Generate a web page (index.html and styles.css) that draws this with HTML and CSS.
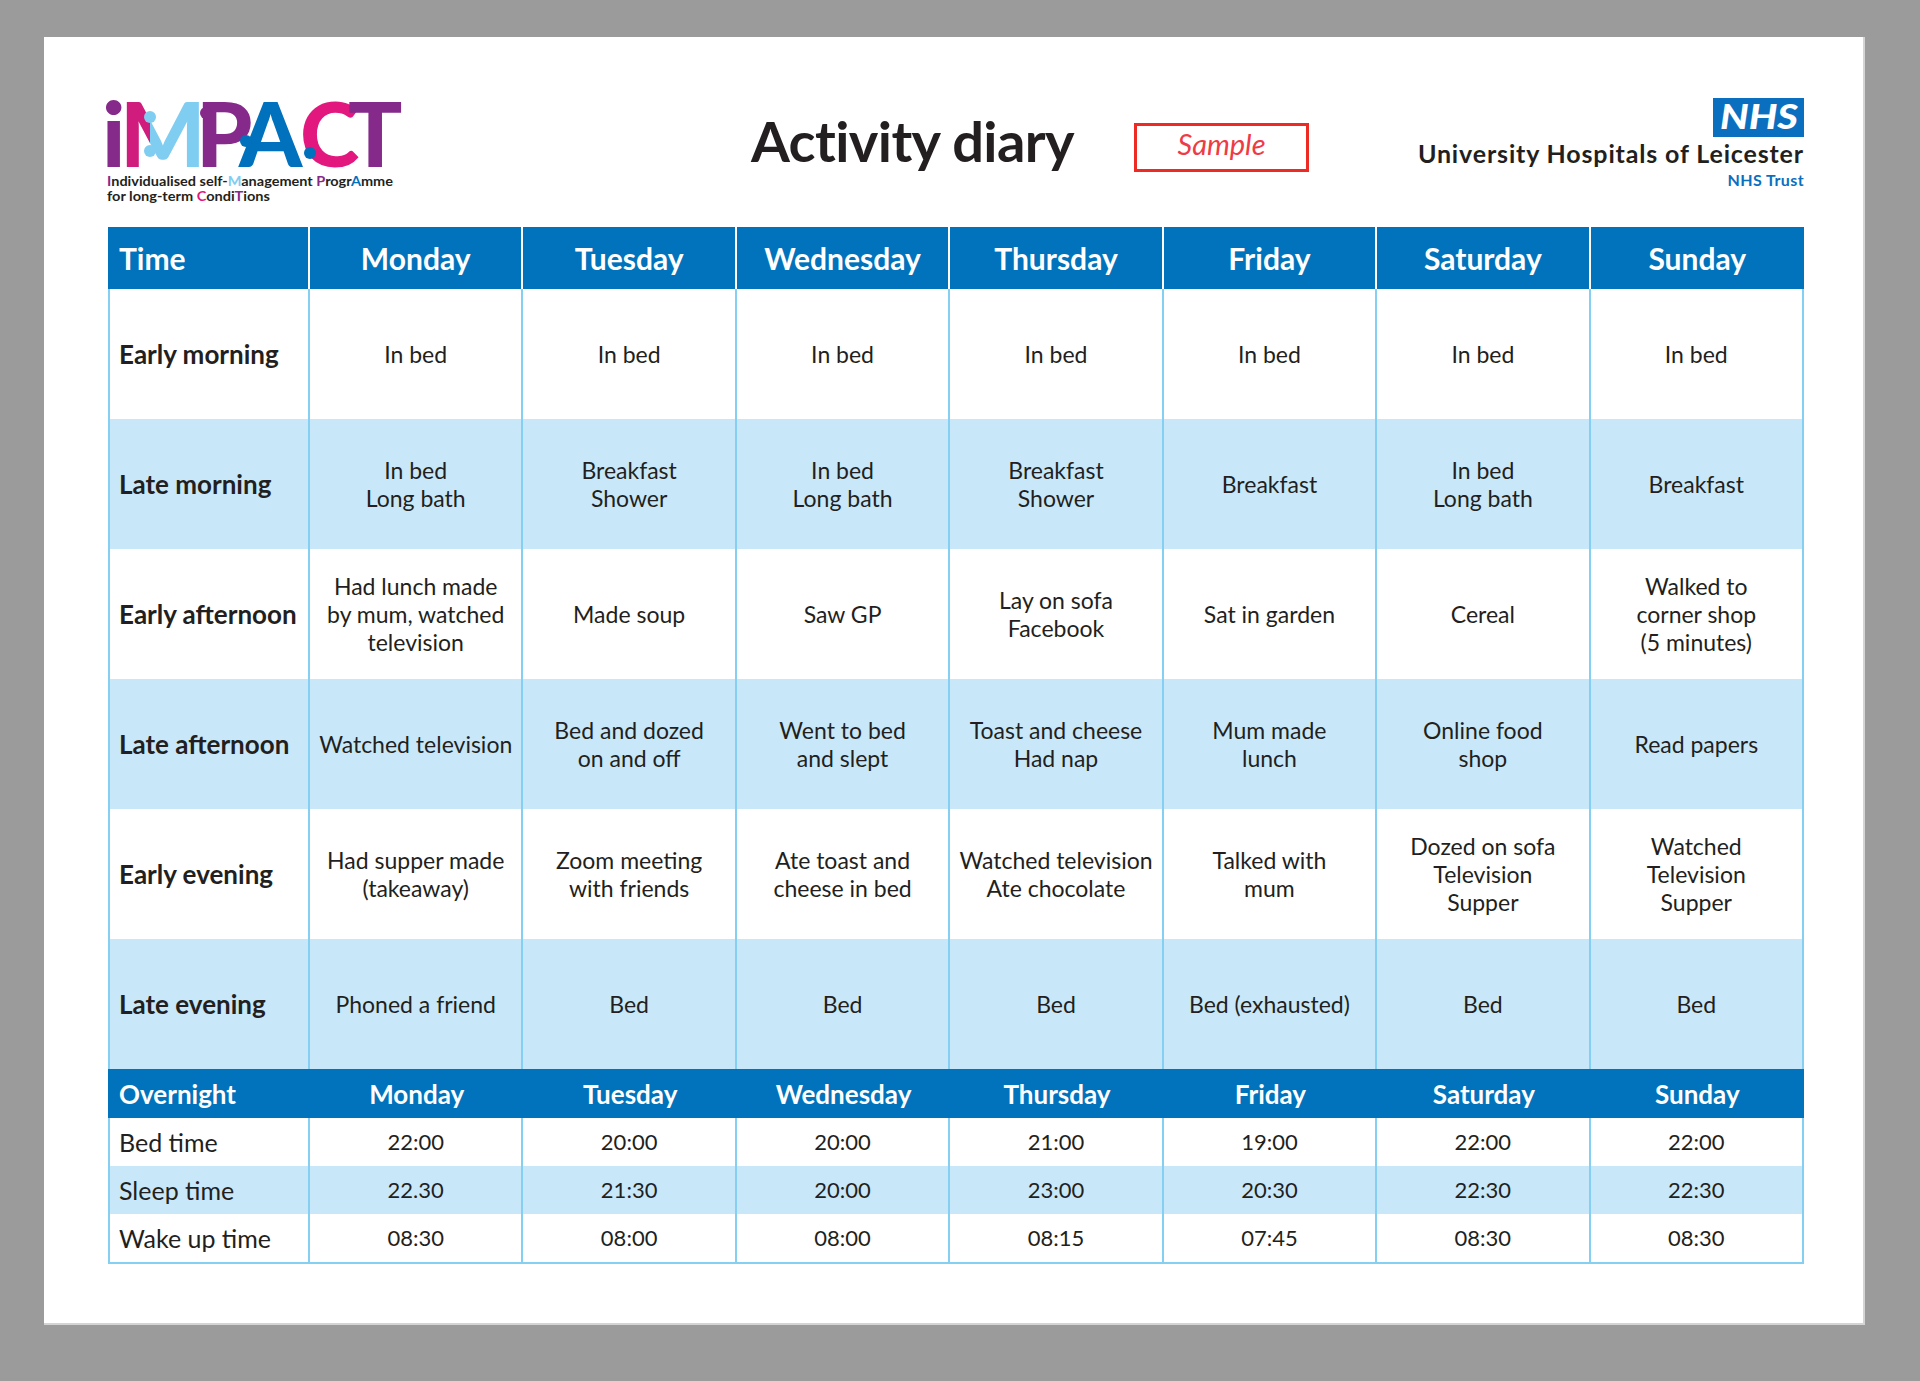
FILE: index.html
```html
<!DOCTYPE html>
<html lang="en">
<head>
<meta charset="utf-8">
<title>Activity diary</title>
<link rel="stylesheet" href="styles.css">
</head>
<body>
<div class="paper">
  <header class="top">
    <svg class="logo" width="310" height="140" viewBox="0 -25 310 140" aria-label="IMPACT">
      <defs>
        <linearGradient id="mgrad" gradientUnits="userSpaceOnUse" x1="27" y1="0" x2="105" y2="0">
          <stop offset="0" stop-color="#d01c7c"/>
          <stop offset="0.29" stop-color="#d01c7c"/>
          <stop offset="0.29" stop-color="#80cdf2"/>
          <stop offset="1" stop-color="#80cdf2"/>
        </linearGradient>
      </defs>
      <text class="logo-letters" x="2 20 96 139 200 248" y="72"><tspan fill="#85298a">i</tspan><tspan fill="url(#mgrad)">M</tspan><tspan fill="#85298a">P</tspan><tspan fill="#0071bc">A</tspan><tspan fill="#e2187f">C</tspan><tspan fill="#85298a">T</tspan></text>
      <circle cx="50" cy="22" r="6" fill="#80cdf2"/>
      <circle cx="50" cy="56" r="6" fill="#80cdf2"/>
      <circle cx="106" cy="18" r="6" fill="#85298a"/>
      <circle cx="146" cy="46" r="6" fill="#0071bc"/>
      <circle cx="210" cy="58" r="6" fill="#0071bc"/>
      <text class="logo-sub" x="7" y="91" textLength="286" lengthAdjust="spacingAndGlyphs"><tspan fill="#85298a">I</tspan>ndividualised self-<tspan fill="#80cdf2">M</tspan>anagement <tspan fill="#85298a">P</tspan>rogr<tspan fill="#0071bc">A</tspan>mme</text>
      <text class="logo-sub" x="7" y="106" textLength="163" lengthAdjust="spacingAndGlyphs">for long-term <tspan fill="#e2187f">C</tspan>ondi<tspan fill="#85298a">T</tspan>ions</text>
    </svg>
    <h1 class="title">Activity diary</h1>
    <div class="sample">Sample</div>
    <div class="nhs">
      <svg class="nhs-mark" width="91" height="46" viewBox="0 0 91 46" aria-label="NHS">
        <rect y="7" width="91" height="39" fill="#0b6fc0"/>
        <text x="7" y="38" textLength="78" lengthAdjust="spacingAndGlyphs">NHS</text>
      </svg>
      <div class="trust-name">University Hospitals of Leicester</div>
      <div class="trust-sub">NHS Trust</div>
    </div>
  </header>

  <section class="diary">
    <div class="row head">
      <div class="h first">Time</div>
      <div class="h">Monday</div>
      <div class="h">Tuesday</div>
      <div class="h">Wednesday</div>
      <div class="h">Thursday</div>
      <div class="h">Friday</div>
      <div class="h">Saturday</div>
      <div class="h last">Sunday</div>
    </div>
    <div class="row body">
      <div class="c lab">Early morning</div>
      <div class="c">In bed</div>
      <div class="c">In bed</div>
      <div class="c">In bed</div>
      <div class="c">In bed</div>
      <div class="c">In bed</div>
      <div class="c">In bed</div>
      <div class="c">In bed</div>
    </div>
    <div class="row body alt">
      <div class="c lab">Late morning</div>
      <div class="c">In bed<br>Long bath</div>
      <div class="c">Breakfast<br>Shower</div>
      <div class="c">In bed<br>Long bath</div>
      <div class="c">Breakfast<br>Shower</div>
      <div class="c">Breakfast</div>
      <div class="c">In bed<br>Long bath</div>
      <div class="c">Breakfast</div>
    </div>
    <div class="row body">
      <div class="c lab">Early afternoon</div>
      <div class="c">Had lunch made<br>by mum, watched<br>television</div>
      <div class="c">Made soup</div>
      <div class="c">Saw GP</div>
      <div class="c">Lay on sofa<br>Facebook</div>
      <div class="c">Sat in garden</div>
      <div class="c">Cereal</div>
      <div class="c">Walked to<br>corner shop<br>(5 minutes)</div>
    </div>
    <div class="row body alt">
      <div class="c lab">Late afternoon</div>
      <div class="c">Watched television</div>
      <div class="c">Bed and dozed<br>on and off</div>
      <div class="c">Went to bed<br>and slept</div>
      <div class="c">Toast and cheese<br>Had nap</div>
      <div class="c">Mum made<br>lunch</div>
      <div class="c">Online food<br>shop</div>
      <div class="c">Read papers</div>
    </div>
    <div class="row body">
      <div class="c lab">Early evening</div>
      <div class="c">Had supper made<br>(takeaway)</div>
      <div class="c">Zoom meeting<br>with friends</div>
      <div class="c">Ate toast and<br>cheese in bed</div>
      <div class="c">Watched television<br>Ate chocolate</div>
      <div class="c">Talked with<br>mum</div>
      <div class="c">Dozed on sofa<br>Television<br>Supper</div>
      <div class="c">Watched<br>Television<br>Supper</div>
    </div>
    <div class="row body alt">
      <div class="c lab">Late evening</div>
      <div class="c">Phoned a friend</div>
      <div class="c">Bed</div>
      <div class="c">Bed</div>
      <div class="c">Bed</div>
      <div class="c">Bed (exhausted)</div>
      <div class="c">Bed</div>
      <div class="c">Bed</div>
    </div>
  </section>

  <section class="overnight">
    <div class="row ohead">
      <div class="oh first">Overnight</div>
      <div class="oh">Monday</div>
      <div class="oh">Tuesday</div>
      <div class="oh">Wednesday</div>
      <div class="oh">Thursday</div>
      <div class="oh">Friday</div>
      <div class="oh">Saturday</div>
      <div class="oh">Sunday</div>
    </div>
    <div class="row orow">
      <div class="o lab">Bed time</div>
      <div class="o">22:00</div>
      <div class="o">20:00</div>
      <div class="o">20:00</div>
      <div class="o">21:00</div>
      <div class="o">19:00</div>
      <div class="o">22:00</div>
      <div class="o">22:00</div>
    </div>
    <div class="row orow alt">
      <div class="o lab">Sleep time</div>
      <div class="o">22.30</div>
      <div class="o">21:30</div>
      <div class="o">20:00</div>
      <div class="o">23:00</div>
      <div class="o">20:30</div>
      <div class="o">22:30</div>
      <div class="o">22:30</div>
    </div>
    <div class="row orow">
      <div class="o lab">Wake up time</div>
      <div class="o">08:30</div>
      <div class="o">08:00</div>
      <div class="o">08:00</div>
      <div class="o">08:15</div>
      <div class="o">07:45</div>
      <div class="o">08:30</div>
      <div class="o">08:30</div>
    </div>
  </section>
</div>
</body>
</html>
```

FILE: styles.css
```css
html {
  background: #9b9b9b;
}

body {
  margin: 0;
  padding: 37px 0 0 44px;
  font-family: Lato, "Open Sans", "Liberation Sans", sans-serif;
  color: #231f20;
}

.paper {
  width: 1821px;
  height: 1288px;
  box-sizing: border-box;
  background: #ffffff;
  border-right: 2px solid #d4d4d4;
  border-bottom: 2px solid #d4d4d4;
  padding: 0 59px 0 64px;
}

/* ---------- header ---------- */
.top {
  display: flex;
  align-items: flex-start;
  height: 190px;
  width: 1696px;
}

.logo {
  flex: none;
  display: block;
  margin: 33px 0 0 -8px;
}

.logo-letters {
  font-family: Lato, "DejaVu Sans", sans-serif;
  font-weight: 900;
  font-size: 90px;
}

.logo-sub {
  font-family: Lato, "DejaVu Sans", sans-serif;
  font-weight: 700;
  font-size: 12.5px;
  fill: #231f20;
}

.title {
  flex: none;
  margin: 76px 0 0 341px;
  width: 383px;
  font-size: 56px;
  line-height: 56px;
  font-weight: 700;
  letter-spacing: -0.6px;
  color: #231f20;
  white-space: nowrap;
}

.sample {
  flex: none;
  box-sizing: border-box;
  width: 175px;
  height: 49px;
  margin-top: 86px;
  border: 3px solid #ee2a24;
  padding-bottom: 7px;
  line-height: 36px;
  text-align: center;
  font-style: italic;
  font-size: 29px;
  color: #ee3b45;
}

.nhs {
  margin-left: auto;
  margin-top: 54px;
  display: flex;
  flex-direction: column;
  align-items: flex-end;
}

.nhs-mark {
  display: block;
}

.nhs-mark text {
  font-family: Lato, "DejaVu Sans", sans-serif;
  font-weight: 900;
  font-style: italic;
  font-size: 35px;
  fill: #ffffff;
}

.trust-name {
  margin-top: 4px;
  font-size: 25px;
  line-height: 25px;
  font-weight: 700;
  letter-spacing: 0.85px;
  color: #231f20;
  white-space: nowrap;
}

.trust-sub {
  margin-top: 6px;
  font-size: 16px;
  line-height: 16px;
  font-weight: 700;
  letter-spacing: 0.4px;
  color: #0b6fc0;
}

/* ---------- table ---------- */
.diary,
.overnight {
  width: 1696px;
}

.row {
  display: grid;
  grid-template-columns: 202px repeat(7, minmax(0, 1fr));
}

.row.alt {
  background: #c8e8fa;
}

.head {
  height: 62px;
  background: #0073bc;
}

.h {
  box-sizing: border-box;
  display: flex;
  align-items: center;
  justify-content: center;
  border-right: 2px solid #ffffff;
  color: #ffffff;
  font-weight: 700;
  font-size: 30px;
}

.h.first {
  justify-content: flex-start;
  padding-left: 11px;
}

.h.last {
  border-right: 0;
}

.body {
  height: 130px;
}

.c,
.o {
  box-sizing: border-box;
  display: flex;
  align-items: center;
  justify-content: center;
  text-align: center;
  border-right: 2px solid #84cff2;
  font-size: 23px;
  line-height: 28px;
  color: #231f20;
}

.c.lab,
.o.lab {
  justify-content: flex-start;
  text-align: left;
  border-left: 2px solid #84cff2;
  padding-left: 9px;
}

.c.lab {
  font-weight: 700;
  font-size: 26px;
}

.ohead {
  height: 49px;
  background: #0073bc;
}

.oh {
  display: flex;
  align-items: center;
  justify-content: center;
  color: #ffffff;
  font-weight: 700;
  font-size: 26px;
}

.oh.first {
  justify-content: flex-start;
  padding-left: 11px;
}

.orow {
  height: 48px;
}

.o {
  font-size: 22px;
}

.o.lab {
  font-size: 25px;
}

.overnight {
  border-bottom: 2px solid #84cff2;
}
```
